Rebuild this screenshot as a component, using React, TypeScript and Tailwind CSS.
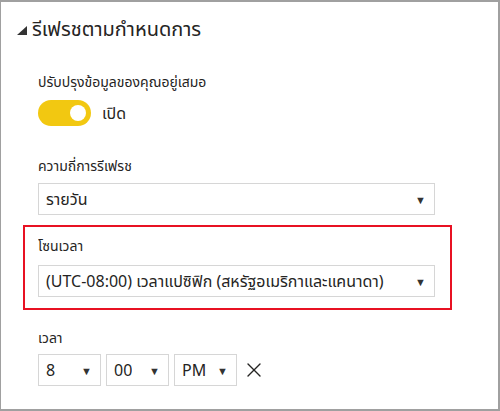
import { X } from 'lucide-react';

function Select({ value, w }: { value: string; w: string }) {
  return (
    <div
      className={`${w} h-[32px] flex items-center justify-between border border-[#d6d6d6] bg-white pl-[7px] pr-[8px] text-[16px] text-[#252423]`}
    >
      <span className="leading-[20px] h-[20px] overflow-hidden">{value}</span>
      <span className="text-[11px] leading-none text-[#333]">▼</span>
    </div>
  );
}

export default function App() {
  return (
    <div
      className="w-[500px] h-[411px] bg-white border-t-2 border-l border-r-2 border-b-2 border-[#a0a0a0] overflow-hidden text-[#252423]"
      style={{ fontFamily: '"Segoe UI", "Noto Sans", "Noto Sans Thai", Tahoma, sans-serif' }}
    >
      <div className="pl-[16px] pt-[13px] h-[41px] flex items-center gap-[5px]">
        <svg width="10" height="10" viewBox="0 0 10 10" className="mt-[4px]">
          <polygon points="10,0 10,9 0,9" fill="#333" />
        </svg>
        <span className="text-[20px] h-[28px] leading-[28px] overflow-hidden">รีเฟรชตามกำหนดการ</span>
      </div>

      <div className="pl-[37px] pt-[29px]">
        <div className="text-[14px] h-[20px] leading-[20px] overflow-hidden">ปรับปรุงข้อมูลของคุณอยู่เสมอ</div>
        <div className="mt-[8px] h-[26px] flex items-center gap-[11px]">
          <div className="w-[53px] h-[26px] rounded-full bg-[#f2c811] flex items-center justify-end pr-[5px]">
            <div className="w-[16px] h-[16px] rounded-full bg-white" />
          </div>
          <span className="text-[16px] h-[22px] leading-[22px] overflow-hidden">เปิด</span>
        </div>

        <div className="mt-[30px] text-[14px] h-[20px] leading-[20px] overflow-hidden">ความถี่การรีเฟรช</div>
        <div className="mt-[7px]">
          <Select value="รายวัน" w="w-[397px]" />
        </div>
      </div>

      <div className="ml-[22px] mt-[10px] w-[429px] h-[85px] border-2 border-[#e81123] pl-[13px] pt-[9px]">
        <div className="text-[14px] h-[20px] leading-[20px] overflow-hidden">โซนเวลา</div>
        <div className="mt-[9px]">
          <Select value="(UTC-08:00) เวลาแปซิฟิก (สหรัฐอเมริกาและแคนาดา)" w="w-[397px]" />
        </div>
      </div>

      <div className="pl-[37px] pt-[18px]">
        <div className="text-[14px] h-[20px] leading-[20px] overflow-hidden">เวลา</div>
        <div className="mt-[6px] flex items-center gap-[5px]">
          <Select value="8" w="w-[63px]" />
          <Select value="00" w="w-[63px]" />
          <Select value="PM" w="w-[63px]" />
          <X size={24} strokeWidth={1.4} className="text-[#252423]" />
        </div>
      </div>
    </div>
  );
}
